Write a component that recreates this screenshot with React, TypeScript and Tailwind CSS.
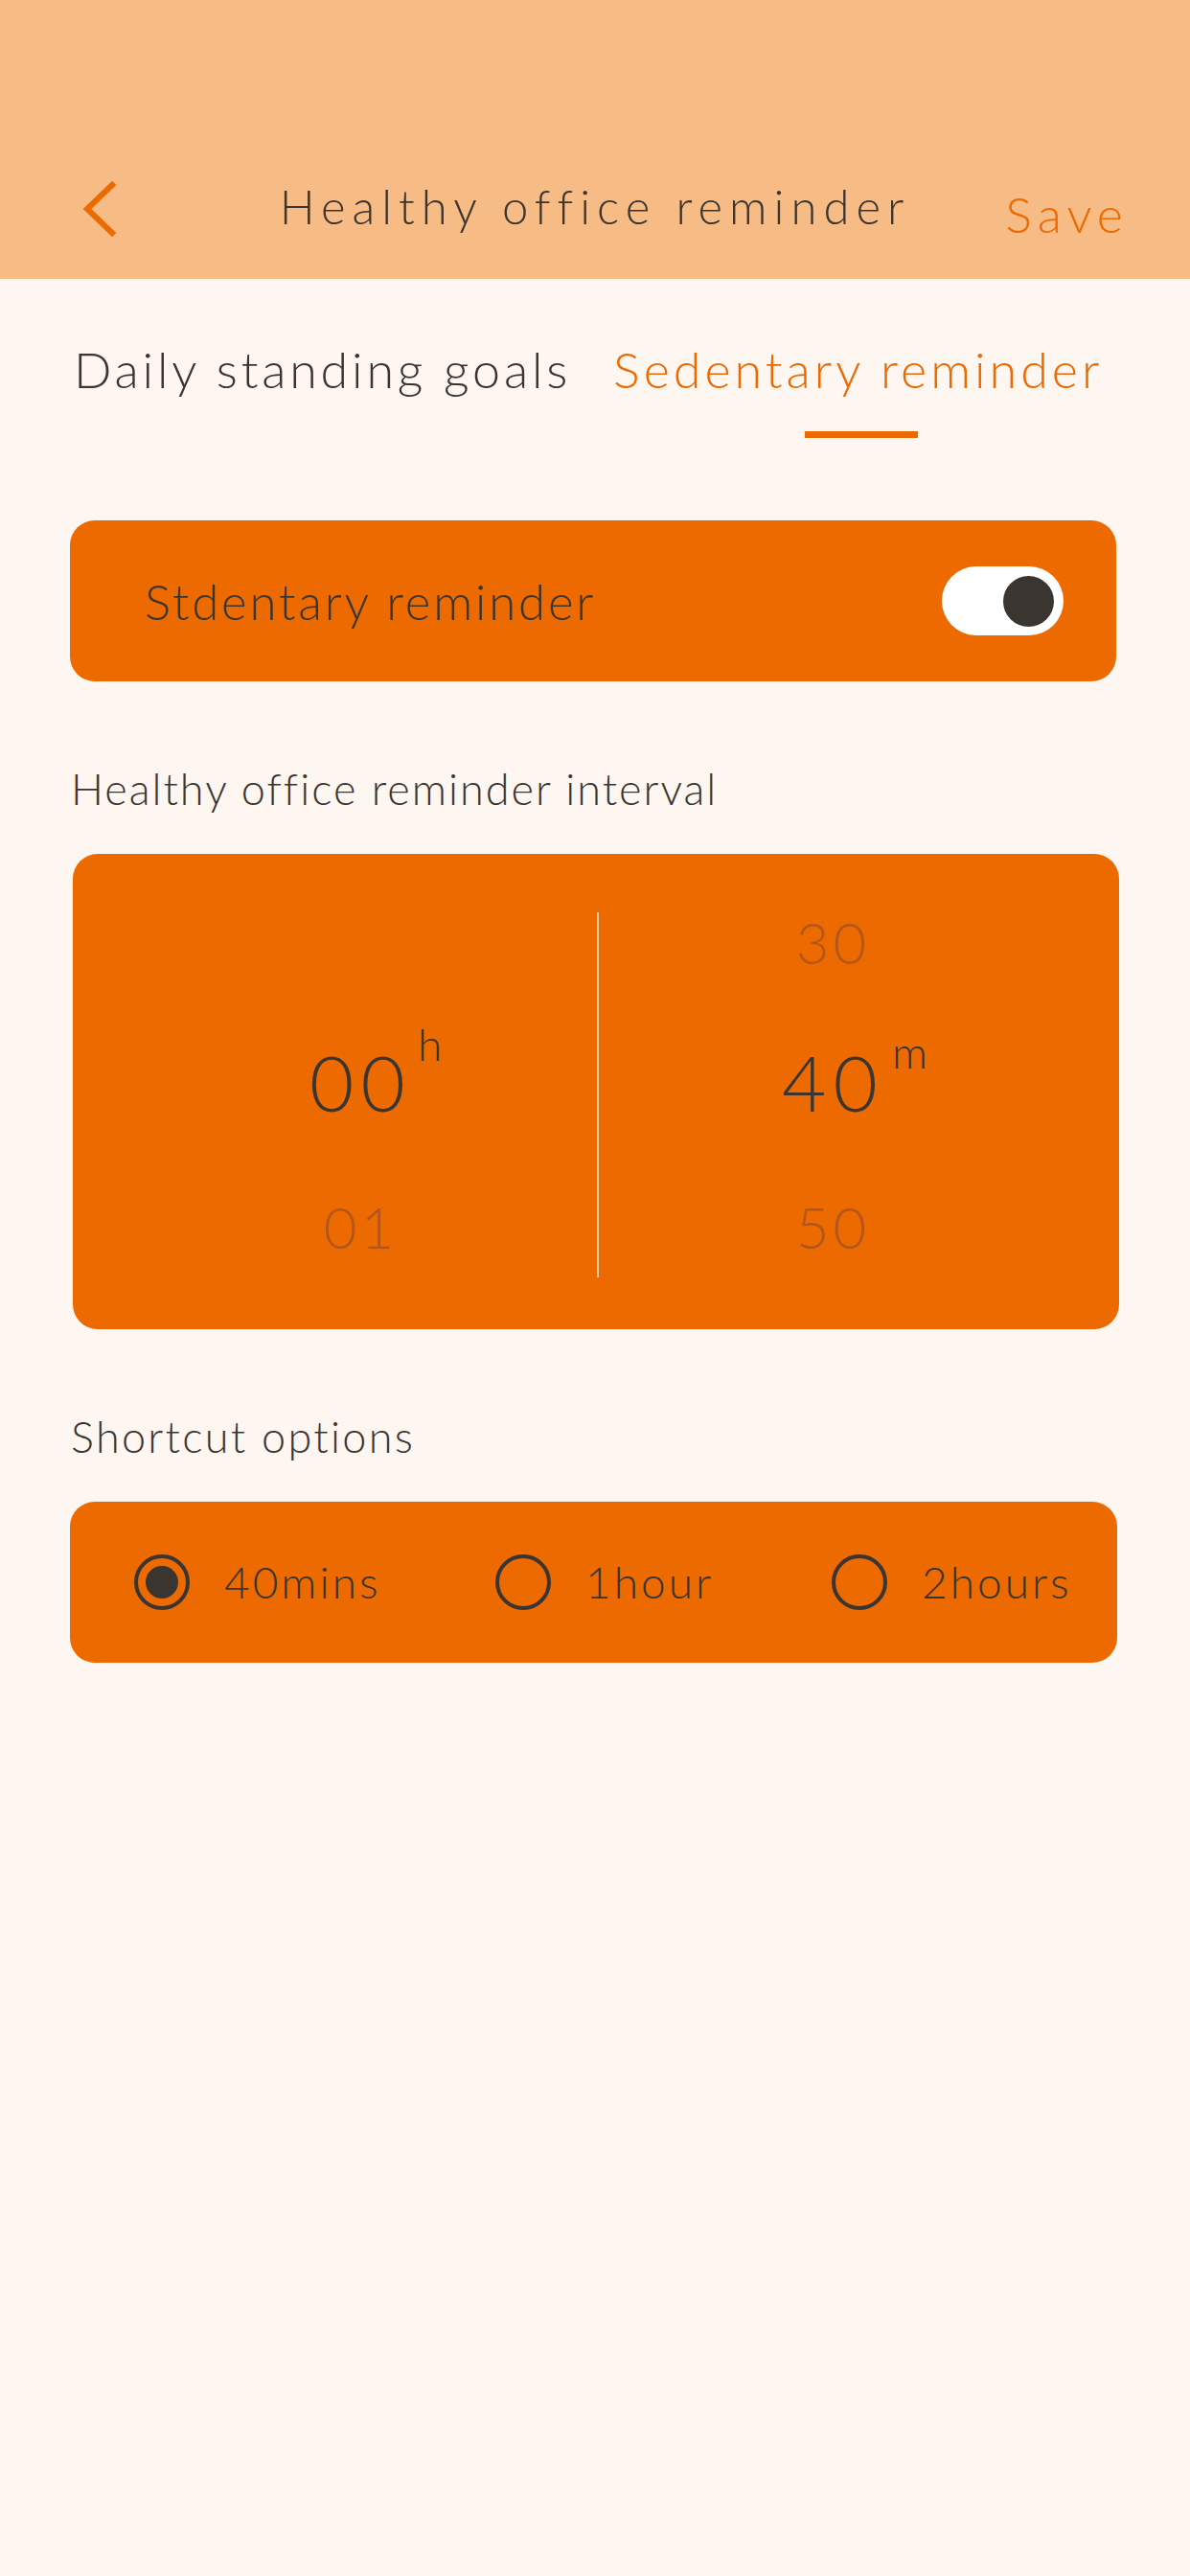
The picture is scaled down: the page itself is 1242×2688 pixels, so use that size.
import React from 'react';

const font = { fontFamily: 'Lato, "Open Sans", sans-serif' };

function BackIcon() {
  return (
    <svg width="40" height="60" viewBox="0 0 40 60" fill="none">
      <path d="M33 5 L7 30 L33 55" stroke="#EC6A00" strokeWidth="6" strokeLinecap="square" />
    </svg>
  );
}

function Toggle({ on }: { on: boolean }) {
  return (
    <div className="w-[127px] h-[72px] rounded-full bg-white flex items-center justify-end pr-[10px]">
      <div className={`w-[53px] h-[53px] rounded-full ${on ? 'bg-[#3A3531]' : 'bg-gray-300'}`} />
    </div>
  );
}

function Radio({ checked, label }: { checked: boolean; label: string }) {
  return (
    <div className="flex items-center gap-[36px]">
      <div className="w-[58px] h-[58px] rounded-full border-[4px] border-[#3A3531] flex items-center justify-center">
        {checked && <div className="w-[34px] h-[34px] rounded-full bg-[#3A3531]" />}
      </div>
      <span className="text-[46px] leading-none font-light tracking-[3px] text-[#3A3531]">{label}</span>
    </div>
  );
}

function PickerColumn({ prev, current, next, unit, side }: { prev?: string; current: string; next?: string; unit: string; side: 'left' | 'right' }) {
  return (
    <div className={`flex flex-col items-center ${side === 'left' ? 'w-[547px] pl-[54px]' : 'flex-1 pr-[54px]'}`}>
      <div className="h-[62px] flex items-center text-[60px] leading-none font-light tracking-[4px] text-[#B3561C]">
        {prev}
      </div>
      <div className="mt-[65px] h-[100px] flex items-center">
        <span className="relative text-[80px] leading-none font-light tracking-[7px] text-[#3A3531]">
          {current}
          <span className={`absolute left-full text-[46px] font-light tracking-normal ${unit === 'h' ? 'ml-[6px] top-[-22px]' : 'ml-[8px] top-[-14px]'}`}>
            {unit}
          </span>
        </span>
      </div>
      <div className="mt-[70px] h-[62px] flex items-center text-[60px] leading-none font-light tracking-[4px] text-[#B3561C]">
        {next}
      </div>
    </div>
  );
}

export default function App() {
  return (
    <div className="w-full min-h-[2688px] bg-[#FEF6F0] text-[#3A3531]" style={font}>
      {/* header */}
      <div className="h-[291px] bg-[#F7BB85] pt-[168px]">
        <div className="h-[100px] grid grid-cols-[1fr_auto_1fr] items-center">
          <div className="pl-[84px] flex items-center">
            <BackIcon />
          </div>
          <div className="-mt-[6px] text-[49px] leading-none font-light tracking-[7px] text-[#3A3531]">
            Healthy office reminder
          </div>
          <div className="flex justify-end pr-[64px] mt-[10px] text-[52px] leading-none font-light tracking-[6px] text-[#EC6A00]">
            Save
          </div>
        </div>
      </div>

      {/* tabs */}
      <div className="flex pl-[77px] gap-[44px] pt-[54px]">
        <div className="h-[80px] flex items-center text-[52px] leading-none font-light tracking-[3.8px]">
          Daily standing goals
        </div>
        <div className="flex flex-col items-center">
          <div className="h-[80px] flex items-center text-[52px] leading-none font-light tracking-[4px] text-[#EC6A00]">
            Sedentary reminder
          </div>
          <div className="mt-[25px] ml-[6px] w-[118px] h-[7px] bg-[#EC6A00]" />
        </div>
      </div>

      {/* sedentary toggle */}
      <div className="mt-[86px] ml-[73px] w-[1092px] h-[168px] rounded-[26px] bg-[#EC6A00] flex items-center justify-between pl-[78px] pr-[55px]">
        <span className="text-[51px] leading-none font-light tracking-[2.8px]">Stdentary reminder</span>
        <Toggle on />
      </div>

      {/* interval */}
      <div className="mt-[87px] pl-[74px] h-[50px] flex items-center text-[45px] leading-none font-light tracking-[2px]">
        Healthy office reminder interval
      </div>
      <div className="mt-[43px] ml-[76px] w-[1092px] h-[496px] rounded-[26px] bg-[#EC6A00] flex pt-[61px] pb-[54px]">
        <PickerColumn current="00" next="01" unit="h" side="left" />
        <div className="w-[2px] bg-[#F8CFA8]" />
        <PickerColumn prev="30" current="40" next="50" unit="m" side="right" />
      </div>

      {/* shortcuts */}
      <div className="mt-[87px] pl-[74px] h-[50px] flex items-center text-[45px] leading-none font-light tracking-[2.3px]">
        Shortcut options
      </div>
      <div className="mt-[43px] ml-[73px] w-[1093px] h-[168px] rounded-[26px] bg-[#EC6A00] flex items-center pl-[67px]">
        <div className="w-[377px]">
          <Radio checked label="40mins" />
        </div>
        <div className="w-[351px]">
          <Radio checked={false} label="1hour" />
        </div>
        <Radio checked={false} label="2hours" />
      </div>
    </div>
  );
}
